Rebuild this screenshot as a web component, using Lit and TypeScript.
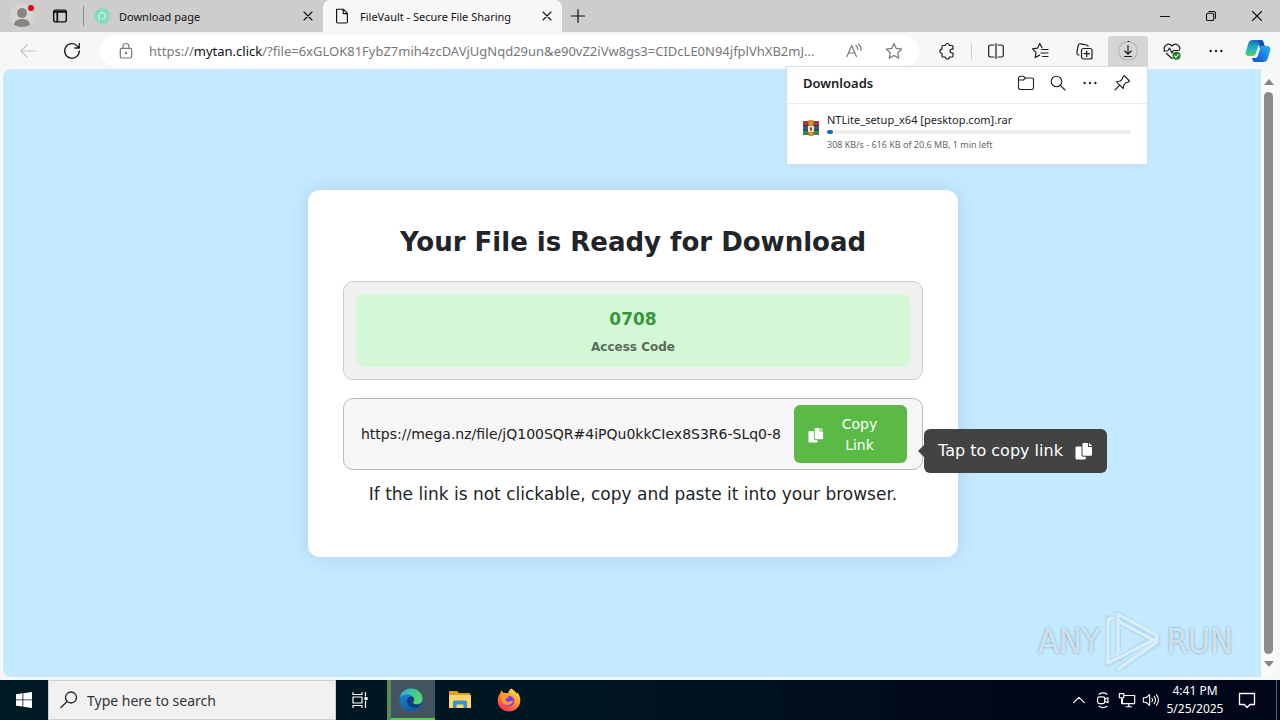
import { LitElement, html, css, svg } from "lit";
import { customElement } from "lit/decorators.js";

const shared = css`
  * { box-sizing: border-box; }
  button { font: inherit; color: inherit; border: 0; background: none; padding: 0; margin: 0; }
  svg { display: block; flex: none; }
  .line { fill: none; stroke: currentColor; stroke-linecap: round; stroke-linejoin: round; }
  .icon-btn { display: flex; align-items: center; justify-content: center; flex: none; }
`;

const icon = (size: number, body: unknown, width = 1.2, box = 20) => html`
  <svg class="line" width=${size} height=${size} viewBox="0 0 ${box} ${box}" stroke-width=${width} aria-hidden="true">${body}</svg>`;

const cross = svg`<path d="M5 5l10 10M15 5L5 15"/>`;
const dots = svg`<g fill="currentColor" stroke="none"><circle cx="4" cy="10" r="1.3"/><circle cx="10" cy="10" r="1.3"/><circle cx="16" cy="10" r="1.3"/></g>`;
const copyIcon = (size: number) => html`
  <svg width=${size} height=${size} viewBox="0 0 18 18" fill="#fff" aria-hidden="true">
    <path d="M8 1h5v4h4v7.500a1.300 1.300 0 0 1-1.300 1.300H8.800a1.300 1.300 0 0 1-1.300-1.300V1.500zM14 .8L17.200 4H14z"/>
    <path d="M1.700 4.500h4.800v8.200c0 1.200 1 2.100 2.100 2.100h2.200v1.400a1.200 1.200 0 0 1-1.200 1.200H1.700a1.200 1.200 0 0 1-1.200-1.200V5.700c0-.7.500-1.200 1.200-1.200z"/>
  </svg>`;

@customElement("tab-strip")
class TabStrip extends LitElement {
  static styles = [shared, css`
    :host { display: flex; height: 32px; background: #cdcdcd; color: #111; font-size: 12px; }
    .profile { width: 44px; }
    .actions { width: 32px; }
    .sep { width: 1px; height: 20px; margin: 6px 0 0 7px; background: #8c8c8c; }
    .tab { display: flex; align-items: center; width: 239px; padding: 0 7px 0 10px; }
    .tab.active { background: #f7f7f7; border-radius: 7px 7px 0 0; }
    .label { flex: 1; padding-left: 9px; white-space: nowrap; font-size: 11px; }
    .new { width: 32px; }
    .window { margin-left: auto; display: flex; }
    .window button { width: 46px; }
  `];
  render() {
    return html`
      <button class="icon-btn profile" aria-label="Profile">
        <svg width="28" height="28" viewBox="0 0 28 28"><circle cx="14" cy="14" r="12" fill="#d6d3d1"/><circle cx="14" cy="11" r="5" fill="#868482"/><path d="M6 23c0-8 16-8 16 0q-8 4-16 0z" fill="#868482"/><circle cx="23" cy="6" r="3" fill="#e3000b"/></svg>
      </button>
      <button class="icon-btn actions" aria-label="Tab actions">${icon(18, svg`<rect x="3" y="3.500" width="14" height="13" rx="2"/><path d="M3.500 5.500h13M7 7v9" stroke-width="2"/>`, 1.6)}</button>
      <span class="sep"></span>
      <div class="tab">
        <svg width="16" height="16" viewBox="0 0 16 16"><circle cx="8" cy="8" r="7.800" fill="#83dcc0"/><path d="M5 13V8a3.200 3.200 0 1 1 3.200 3" fill="none" stroke="#c4f1e4" stroke-width="1.500"/></svg>
        <span class="label">Download page</span>
        <button aria-label="Close tab">${icon(16, cross, 1.4)}</button>
      </div>
      <div class="tab active">
        ${icon(18, svg`<path d="M4 2.500h7.500L16 7v9.500a1.300 1.300 0 0 1-1.300 1.300H5.300A1.300 1.300 0 0 1 4 16.500zM11.300 2.800V7.300H16"/>`, 1.3)}
        <span class="label">FileVault - Secure File Sharing</span>
        <button aria-label="Close tab">${icon(16, cross, 1.4)}</button>
      </div>
      <button class="icon-btn new" aria-label="New tab">${icon(20, svg`<path d="M10 3.500v13M3.500 10h13"/>`, 1.2)}</button>
      <div class="window">
        <button class="icon-btn" aria-label="Minimize">${icon(18, svg`<path d="M5 10.500h10"/>`, 1.2)}</button>
        <button class="icon-btn" aria-label="Restore">${icon(18, svg`<rect x="5" y="7" width="8" height="8" rx="1.500"/><path d="M7.500 5h5.500a2 2 0 0 1 2 2v5.500"/>`, 1.2)}</button>
        <button class="icon-btn" aria-label="Close window">${icon(18, cross, 1.2)}</button>
      </div>`;
  }
}

@customElement("downloads-panel")
class DownloadsPanel extends LitElement {
  static styles = [shared, css`
    :host { box-sizing: border-box; display: block; width: 362px; background: #fff; border: 1px solid #d4dfe6; box-shadow: 0 1px 3px rgba(0, 60, 100, 0.06); color: #222; }
    .head { display: flex; align-items: center; height: 37px; padding: 0 9px 3px 16px; border-bottom: 1px solid #ececec; }
    .title { flex: 1; margin: 0; font-size: 13px; font-weight: 600; }
    .head button { width: 32px; }
    .item { display: flex; gap: 8px; padding: 8px 16px 11px; }
    .archive { margin-top: 8px; }
    .info { flex: 1; }
    .name { font-size: 11px; line-height: 16px; color: #1b1b1b; }
    .bar { height: 4px; margin-top: 2px; border-radius: 2px; background: #ededed; }
    .fill { height: 4px; border-radius: 2px; background: #1b6ac9; }
    .meta { margin-top: 3px; font-size: 9px; line-height: 16px; color: #666; }
  `];
  progress = 2;
  render() {
    return html`
      <div class="head">
        <h2 class="title">Downloads</h2>
        <button class="icon-btn" aria-label="Open folder">${icon(20, svg`<path d="M2.500 5A1.700 1.700 0 0 1 4.200 3.300h3.300L9.300 5h6.500a1.700 1.700 0 0 1 1.700 1.700v8.100a1.700 1.700 0 0 1-1.700 1.700H4.200a1.700 1.700 0 0 1-1.700-1.700zM2.700 7h4.800l2-2"/>`, 1.1)}</button>
        <button class="icon-btn" aria-label="Search downloads">${icon(20, svg`<circle cx="8.500" cy="8.500" r="5.300"/><path d="M12.500 12.500l4.500 4.500"/>`, 1.1)}</button>
        <button class="icon-btn" aria-label="More options">${icon(18, dots)}</button>
        <button class="icon-btn" aria-label="Pin">${icon(20, svg`<path d="M12 2.500l5.500 5.500-1.700 1.200-2.300.8-1.500 1.800-.8 3.700-6.700-6.700 3.700-.8L10 6.500l.8-2.300zM7.800 12.200L3 17"/>`, 1.1)}</button>
      </div>
      <div class="item">
        <svg class="archive" width="16" height="16" viewBox="0 0 16 16">
          <rect y="1" width="16" height="5" fill="#a3383b"/><rect y="6" width="16" height="4" fill="#355b9c"/><rect y="10" width="16" height="5" fill="#3f8447"/>
          <path d="M0 5.700h16M0 10h16" stroke="#2b2338" stroke-width=".8"/>
          <rect x="5.500" y="0" width="5" height="16" fill="#d8902c"/><rect x="5" y="6" width="6" height="6" fill="#f3e3b4"/><rect x="7" y="7.500" width="2" height="3" fill="#7a4a20"/>
        </svg>
        <div class="info">
          <div class="name">NTLite_setup_x64 [pesktop.com].rar</div>
          <div class="bar" role="progressbar" aria-valuenow=${this.progress}><div class="fill" style="width:${this.progress}%"></div></div>
          <div class="meta">308 KB/s - 616 KB of 20.6 MB, 1 min left</div>
        </div>
      </div>`;
  }
}

@customElement("address-toolbar")
class AddressToolbar extends LitElement {
  static styles = [shared, css`
    :host { display: flex; align-items: center; gap: 4px; height: 37px; padding: 0 4px 0 8px; background: #f7f7f7; color: #1c1c1c; }
    .tool { width: 40px; height: 30px; border-radius: 4px 4px 0 0; }
    .off { color: #c6c6c6; }
    .on { background: #d5d5d5; }
    .address { flex: 1; min-width: 0; display: flex; align-items: center; height: 31px; margin: 0 4px; padding: 0 5px 0 16px; border-radius: 16px; background: #fff; color: #777; }
    .url { flex: 1; min-width: 0; padding: 0 1px 0 13px; overflow: hidden; text-overflow: ellipsis; white-space: nowrap; font-size: 13px; }
    .host { color: #111; }
    .address .icon-btn { width: 40px; }
    .sep { width: 1px; height: 16px; background: #cfcfcf; }
    .wrap { position: relative; }
    .panel { position: absolute; top: 100%; right: 0; z-index: 5; }
    .copilot { width: 36px; }
  `];
  render() {
    return html`
      <button class="icon-btn tool off" aria-label="Back">${icon(20, svg`<path d="M17.500 10H3M9 4l-6.200 6L9 16"/>`, 1.2)}</button>
      <button class="icon-btn tool" aria-label="Refresh">${icon(20, svg`<path d="M17.300 10a7.300 7.300 0 1 1-1.700-4.700L17.300 7M17.300 2.500V7H12.800"/>`, 1.3)}</button>
      <div class="address">
        ${icon(20, svg`<rect x="4.300" y="7.300" width="11.400" height="9.700" rx="1.500"/><path d="M7 7V5.500a3 3 0 0 1 6 0V7"/><circle cx="10" cy="12" r=".6" fill="currentColor"/>`, 1.2)}
        <span class="url">https://<span class="host">mytan.click</span>/?file=6xGLOK81FybZ7mih4zcDAVjUgNqd29un&amp;e90vZ2iVw8gs3=CIDcLE0N94jfplVhXB2mJ...</span>
        <button class="icon-btn" aria-label="Read aloud">${icon(20, svg`<path d="M3 15.500L7.700 4.500 12.400 15.500M4.700 12h6M12 4.500q2 1.500 1.700 4M14.300 3q3.300 2.500 2.700 6.500"/>`, 1.2)}</button>
        <button class="icon-btn" aria-label="Add to favorites">${icon(20, svg`<path d="M10 2.500l2.300 4.900 5.400.7-3.900 3.700 1 5.300L10 14.500l-4.800 2.600 1-5.300-3.900-3.700 5.400-.7z"/>`, 1.2)}</button>
      </div>
      <button class="icon-btn tool" aria-label="Extensions">${icon(20, svg`<path d="M6 4.500h2.300a2 2 0 0 1 4 0H15a1 1 0 0 1 1 1v2.700h-1a1.900 1.900 0 0 0 0 3.800h1v3a1 1 0 0 1-1 1h-2.700a2 2 0 0 1-4 0H6a1 1 0 0 1-1-1v-2.700a2.100 2.100 0 0 1 0-4.200V5.500a1 1 0 0 1 1-1z"/>`, 1.2)}</button>
      <span class="sep"></span>
      <button class="icon-btn tool" aria-label="Split screen">${icon(20, svg`<path d="M8 4H4.500A1.800 1.800 0 0 0 2.700 5.800v8.400A1.800 1.800 0 0 0 4.500 16H8M12 4h3.500a1.800 1.800 0 0 1 1.800 1.800v8.400a1.800 1.800 0 0 1-1.800 1.800H12M10 2.500v15"/>`, 1.2)}</button>
      <button class="icon-btn tool" aria-label="Favorites">${icon(20, svg`<path d="M12 6.700L9.800 2.500 7.500 7.200l-5 .7 3.600 3.500-.9 5.100 4.500-2.400M11.500 8.500h6.500M11 12h7M12.500 15.500H18"/>`, 1.2)}</button>
      <button class="icon-btn tool" aria-label="Collections">${icon(20, svg`<rect x="7.500" y="7.500" width="10.500" height="10.500" rx="2"/><path d="M12.700 10v5.500M10 12.700h5.500M5 14l-.8-.3a2 2 0 0 1-1.300-2.300l1.300-7a2 2 0 0 1 2.300-1.600l6.200 1.200a2 2 0 0 1 1.400 1.300"/>`, 1.2)}</button>
      <div class="wrap">
        <button class="icon-btn tool on" aria-label="Downloads">${icon(22, svg`<circle cx="11" cy="11" r="9.500" stroke="#b7b7b7"/><path d="M11 5.500v8.500M7.800 11l3.200 3.200 3.200-3.200M7.500 16.500h7M11 1.500h1"/>`, 1.2, 22)}</button>
        <downloads-panel class="panel"></downloads-panel>
      </div>
      <button class="icon-btn tool" aria-label="Browser essentials">${icon(20, svg`<path d="M2.500 9C.8 5 6.500.8 10 5c3.500-4.200 9.200 0 7.500 4M1.500 10h4.200l1.800-3 2.500 5 1.500-2.500h5M4.500 12.500L10 17.500"/><circle cx="14.500" cy="14.800" r="4" fill="#16801c" stroke="none"/><path d="M12.700 15l1.300 1.300 2.300-2.600" stroke="#fff"/>`, 1.2)}</button>
      <button class="icon-btn tool" aria-label="Settings and more">${icon(18, dots)}</button>
      <button class="icon-btn copilot" aria-label="Copilot">
        <svg width="26" height="24" viewBox="0 0 26 24">
          <defs>
            <linearGradient id="a" x1="0" y1="0" x2="0" y2="1"><stop offset="0" stop-color="#1c63c8"/><stop offset=".5" stop-color="#19b3c0"/><stop offset="1" stop-color="#5ad36a"/></linearGradient>
            <linearGradient id="b" x1="1" y1="0" x2="0" y2="1"><stop offset="0" stop-color="#21b9f5"/><stop offset=".6" stop-color="#1673e6"/><stop offset="1" stop-color="#1552c0"/></linearGradient>
          </defs>
          <path d="M8 1h8c2 0 2.500 2 3 4h-3c-2 0-2.700 1.500-3.200 3.500L11 14c-.5 2-1.500 3-3.500 3H4c-3 0-4-2-3-5l2.500-8C4.200 2 5.500 1 8 1z" fill="url(#a)"/>
          <path d="M18 23h-8c-2 0-2.500-2-3-4h3c2 0 2.700-1.500 3.200-3.500L15 10c.5-2 1.500-3 3.500-3H22c3 0 4 2 3 5l-2.500 8c-.7 2-2 3-4.500 3z" fill="url(#b)"/>
          <path d="M13 1h3c2 0 2.500 2 3 4 .3 1.300.7 2 2 2h-2.500C16 7 15.500 8 15 10z" fill="#1650ad"/>
        </svg>
      </button>`;
  }
}

@customElement("vault-page")
class VaultPage extends LitElement {
  static styles = [shared, css`
    :host { position: relative; display: flex; flex: 1; min-height: 0; margin: 0 4px 0 3px; border-radius: 8px; overflow: hidden; background: #c4eaff; font-family: Verdana, "DejaVu Sans", sans-serif; color: #212529; }
    .main { flex: 1; display: flex; align-items: center; justify-content: center; padding-left: 2px; }
    .card { width: 650px; padding: 35px; border-radius: 12px; background: #fff; box-shadow: 0 0 20px rgba(0, 60, 110, 0.12); text-align: center; }
    .title { margin: 0 0 22px; font-size: 26px; line-height: 34px; font-weight: 700; }
    .code-box { margin-bottom: 18px; padding: 12px; border: 1px solid #ccc; border-radius: 10px; background: #f0f0f0; }
    .code-inner { padding: 12px 12px 9px; border-radius: 8px; background: #d4f7d5; font-weight: 700; }
    .code { font-size: 17px; line-height: 26px; color: #38953e; }
    .code-label { margin-top: 4px; font-size: 12px; line-height: 22px; color: #5a6b5b; }
    .link-box { position: relative; display: flex; align-items: center; gap: 2px; padding: 6px 15px 6px 17px; border: 1px solid #b9b9b9; border-radius: 10px; background: #f6f6f6; }
    .link { flex: 1; min-width: 0; padding: 0; border: 0; outline: 0; background: none; font: inherit; font-size: 14px; color: #212121; }
    .copy { display: flex; align-items: center; gap: 10px; width: 113px; padding: 9px 14px 7px; border-radius: 6px; background: #5aba45; color: #fff; font-size: 14px; line-height: 21px; }
    .copy-text { flex: 1; padding-right: 8px; }
    .tip { position: absolute; left: 100%; top: 30px; z-index: 2; display: flex; align-items: center; gap: 12px; height: 44px; margin-left: 2px; padding: 0 14px; border-radius: 6px; background: #434343; color: #fff; font-size: 16px; white-space: nowrap; }
    .tip::before { content: ""; position: absolute; right: 100%; top: 16px; border: 6px solid transparent; border-left: 0; border-right-color: #434343; }
    .note { margin: 12px -10px 16px; font-size: 17px; line-height: 24px; }
    .scroll { display: flex; flex-direction: column; align-items: center; width: 15px; padding: 9px 0; background: #f9f9f9; color: #858585; }
    .thumb { flex: 1; width: 9px; margin: 6px 0; border-radius: 5px; background: #8b8b8b; }
    .mark { position: absolute; right: 43px; bottom: 4px; display: flex; align-items: center; gap: 5px; font-family: "DejaVu Sans Condensed", sans-serif; font-size: 34px; line-height: 64px; color: rgba(255, 255, 255, 0.6); text-shadow: 0 0 3px rgba(70, 110, 135, 0.6); }
  `];
  render() {
    return html`
      <main class="main">
        <section class="card">
          <h1 class="title">Your File is Ready for Download</h1>
          <div class="code-box"><div class="code-inner">
            <div class="code">0708</div>
            <div class="code-label">Access Code</div>
          </div></div>
          <div class="link-box">
            <input class="link" readonly aria-label="Download link" value="https://mega.nz/file/jQ100SQR#4iPQu0kkCIex8S3R6-SLq0-8">
            <button class="copy">${copyIcon(16)}<span class="copy-text">Copy Link</span></button>
            <div class="tip" role="tooltip"><span>Tap to copy link</span>${copyIcon(18)}</div>
          </div>
          <p class="note">If the link is not clickable, copy and paste it into your browser.</p>
        </section>
      </main>
      <div class="scroll">
        <svg width="10" height="8" viewBox="0 0 10 8"><path d="M0 7h10L5 1z" fill="currentColor"/></svg>
        <span class="thumb"></span>
        <svg width="10" height="8" viewBox="0 0 10 8"><path d="M0 1h10L5 7z" fill="currentColor"/></svg>
      </div>
      <div class="mark">
        <span>ANY</span>
        <svg width="56" height="64" viewBox="0 0 56 64" fill="none" stroke-linejoin="round" stroke-linecap="round">
          <g stroke="#7fa3b8" stroke-opacity=".2" stroke-width="6"><path d="M13 41V5L53 28M13 60L53 34 13 12M7 9H3V55L13 50 48 29"/></g>
          <g stroke="#dceff9" stroke-width="3"><path d="M13 44V5L52 26.500V30M13 12L52 33 13 60M8 9Q3 9 3 14V54L50 30"/></g>
        </svg>
        <span>RUN</span>
      </div>`;
  }
}

@customElement("task-bar")
class TaskBar extends LitElement {
  static styles = [shared, css`
    :host { display: flex; height: 40px; background: linear-gradient(90deg, #001a24, #001520 50%, #020719 80%); color: #fff; }
    .cell { width: 48px; }
    .search { display: flex; align-items: center; gap: 8px; width: 288px; padding: 0 10px; border: 1px solid #d2cfc8; background: #f1f1f1; color: #222; }
    .query { flex: 1; min-width: 0; border: 0; padding: 0; outline: 0; background: none; font: inherit; font-size: 14px; color: #333; }
    .query::placeholder { color: #333; opacity: 1; }
    .apps { display: flex; gap: 1px; margin-left: 3px; }
    .open { background: #45555f; box-shadow: inset 4px 0 #55905a, inset 0 -2px #4fd544; }
    .tray { display: flex; align-items: center; margin-left: auto; }
    .tray .icon-btn { width: 24px; }
    .clock { width: 64px; text-align: center; font-size: 12px; line-height: 18px; }
    .tray .notice { width: 40px; }
    .edge { width: 4px; height: 40px; margin-left: 9px; border-left: 1px solid #60656f; }
  `];
  render() {
    return html`
      <button class="icon-btn cell" aria-label="Start"><svg width="16" height="16" viewBox="0 0 16 16" fill="#fff"><path d="M0 2.200l6.500-.9v6.200H0zM7.300 1.200L16 0v7.500H7.300zM0 8.300h6.500v6.300L0 13.700zM7.300 8.300H16V16l-8.700-1.200z"/></svg></button>
      <label class="search">
        ${icon(20, svg`<circle cx="12" cy="7.500" r="5.500"/><path d="M8 11.500L2 17.500"/>`, 1.3)}
        <input class="query" type="text" placeholder="Type here to search" aria-label="Search">
      </label>
      <button class="icon-btn cell" aria-label="Task view">${icon(20, svg`<path d="M3 2.500V4.500H12V2.500M3 17.500V15.500H12V17.500M3 7h9v6H3zM15.500 2.500V6M15.500 11V17.500"/><rect x="15" y="7.500" width="2" height="2" fill="#fff"/>`, 1.2)}</button>
      <div class="apps">
        <button class="icon-btn cell open" aria-label="Edge">
          <svg width="24" height="24" viewBox="0 0 24 24">
            <defs>
              <linearGradient id="g" x1="0" y1="0" x2="1" y2=".4"><stop offset="0" stop-color="#2aa8e0"/><stop offset="1" stop-color="#55d86c"/></linearGradient>
              <linearGradient id="h" x1="0" y1="0" x2=".5" y2="1"><stop offset="0" stop-color="#1f8fd8"/><stop offset="1" stop-color="#0f5aa8"/></linearGradient>
            </defs>
            <circle cx="12" cy="12" r="11.500" fill="url(#h)"/>
            <path d="M1 9C2.500 3.500 7 .5 12 .5c6.500 0 11.500 5 11.500 10 0 4-3 6-6 6-2.500 0-4-1-3.500-2 1-1 1.200-2 1-3C14.500 8 11 6.500 8 6.500 5 6.500 2 8 1 9z" fill="url(#g)"/>
            <path d="M8 13c0-3 3-5 5.500-4.500C15 9.500 15.500 11 15 12.500c-.5 1.200-1.200 1.500-1 2.300.8 2 5 2.200 8 .4-1 2-2 3-3 4-6 2-11-2-11-6.200z" fill="#123f78"/>
          </svg>
        </button>
        <button class="icon-btn cell" aria-label="File Explorer"><svg width="22" height="20" viewBox="0 0 22 20"><path d="M0 1h8l2 2h11v4H0z" fill="#dd9c2c"/><path d="M0 5h22v13H0z" fill="#fbd668"/><path d="M4 18v-6a1.500 1.500 0 0 1 1.500-1.500h11A1.500 1.500 0 0 1 18 12v6h-3.500v-3.500h-7V18z" fill="#3a93d0"/></svg></button>
        <button class="icon-btn cell" aria-label="Firefox">
          <svg width="24" height="24" viewBox="0 0 24 24">
            <defs><linearGradient id="f" x1=".8" y1="0" x2=".2" y2="1"><stop offset="0" stop-color="#ffe14a"/><stop offset=".5" stop-color="#ff8a2a"/><stop offset="1" stop-color="#f5235d"/></linearGradient></defs>
            <path d="M14 .5c2.500 1 4.500 3 5.500 5l1-1c2 2.500 3 5.500 2.800 8.500C22.800 19 18 23.500 12 23.500S.7 19 .7 13c0-3.500 1-6 2.800-8L4 2.500c1 .3 2 1.300 2.500 2.500C8 4.500 9.500 4.800 11 5.300 11.500 3.500 12.500 1.500 14 .5z" fill="url(#f)"/>
            <circle cx="12" cy="13" r="5.300" fill="#7b3fe4"/><path d="M4.500 8c3-1.500 5-1 7 .3 1 .7-1.500 1.500-2.500 2.200-1 1 0 3 2 3.200 2 .3 3-1 5-.5-1 4-6 5-9 2.500S4 11 4.500 8z" fill="#ff9a30"/>
          </svg>
        </button>
      </div>
      <div class="tray">
        <button class="icon-btn" aria-label="Show hidden icons">${icon(18, svg`<path d="M4 13l6-6 6 6"/>`, 1.3)}</button>
        <button class="icon-btn" aria-label="Meet now">${icon(18, svg`<rect x="4" y="6.500" width="8" height="7.500" rx="2"/><path d="M12 9l3.500-1.500v5.500L12 11.500M5.500 3.500q4.500-3 9 0M5.500 17q4.500 3 9 0"/>`, 1.3)}</button>
        <button class="icon-btn" aria-label="Network">${icon(18, svg`<path d="M7.500 5H18.500V14H5V9M9 17.500h6M12 14v3.500M1.500 3h5v4.500h-5zM4 7.500V14"/>`, 1.3)}</button>
        <button class="icon-btn" aria-label="Volume">${icon(18, svg`<path d="M1.500 7.500H4.500L8.500 4V16L4.500 12.500H1.500zM11 8q1.500 2 0 4M13.500 6q3 4 0 8M16 4q4.500 6 0 12"/>`, 1.2)}</button>
        <div class="clock"><div>4:41 PM</div><div>5/25/2025</div></div>
        <button class="icon-btn notice" aria-label="Notifications">${icon(20, svg`<path d="M2.500 3.500h15v11h-4.500L10 17.500 7.300 14.500H2.500z"/>`, 1.3)}</button>
        <span class="edge"></span>
      </div>`;
  }
}

@customElement("app-root")
class AppRoot extends LitElement {
  static styles = css`
    :host { display: flex; flex-direction: column; height: 100vh; overflow: hidden; background: #f7f7f7; font-family: "Segoe UI", "Noto Sans", sans-serif; }
    .page { margin-bottom: 3px; }
  `;
  render() {
    return html`
      <tab-strip></tab-strip>
      <address-toolbar></address-toolbar>
      <vault-page class="page"></vault-page>
      <task-bar></task-bar>`;
  }
}
